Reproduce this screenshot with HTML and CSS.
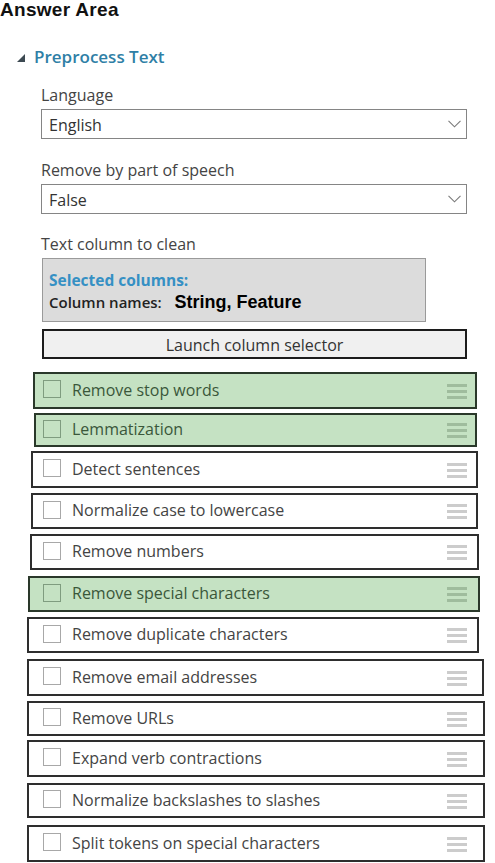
FILE: index.html
```html
<!DOCTYPE html>
<html>
<head>
<meta charset="utf-8">
<link rel="stylesheet" href="styles.css">
</head>
<body>
<h1 class="answer">Answer Area</h1>
<div class="title">
  <svg class="tri" width="8" height="8" viewBox="0 0 8 8"><polygon points="8,0 8,8 0,8" fill="#3d4a52"/></svg>
  <span>Preprocess Text</span>
</div>
<div class="field">
  <div class="label">Language</div>
  <div class="select"><span>English</span>
    <svg class="chev" width="13" height="8" viewBox="0 0 13 8"><polyline points="0.5,0.8 6.5,6.8 12.5,0.8" fill="none" stroke="#7a7a7a" stroke-width="1.1"/></svg>
  </div>
</div>
<div class="field f2">
  <div class="label">Remove by part of speech</div>
  <div class="select"><span>False</span>
    <svg class="chev" width="13" height="8" viewBox="0 0 13 8"><polyline points="0.5,0.8 6.5,6.8 12.5,0.8" fill="none" stroke="#7a7a7a" stroke-width="1.1"/></svg>
  </div>
</div>
<div class="field f3">
  <div class="label">Text column to clean</div>
  <div class="colbox">
    <div class="sel-cols">Selected columns:</div>
    <div class="col-names">Column names: <span class="names">String, Feature</span></div>
  </div>
  <div class="launch">Launch column selector</div>
</div>
<div class="list">
  <div class="row sel"><span class="cb"></span><span class="txt">Remove stop words</span><span class="grip"><i></i><i></i><i></i></span></div>
  <div class="row sel"><span class="cb"></span><span class="txt">Lemmatization</span><span class="grip"><i></i><i></i><i></i></span></div>
  <div class="row"><span class="cb"></span><span class="txt">Detect sentences</span><span class="grip"><i></i><i></i><i></i></span></div>
  <div class="row"><span class="cb"></span><span class="txt">Normalize case to lowercase</span><span class="grip"><i></i><i></i><i></i></span></div>
  <div class="row"><span class="cb"></span><span class="txt">Remove numbers</span><span class="grip"><i></i><i></i><i></i></span></div>
  <div class="row sel"><span class="cb"></span><span class="txt">Remove special characters</span><span class="grip"><i></i><i></i><i></i></span></div>
  <div class="row"><span class="cb"></span><span class="txt">Remove duplicate characters</span><span class="grip"><i></i><i></i><i></i></span></div>
  <div class="row"><span class="cb"></span><span class="txt">Remove email addresses</span><span class="grip"><i></i><i></i><i></i></span></div>
  <div class="row"><span class="cb"></span><span class="txt">Remove URLs</span><span class="grip"><i></i><i></i><i></i></span></div>
  <div class="row"><span class="cb"></span><span class="txt">Expand verb contractions</span><span class="grip"><i></i><i></i><i></i></span></div>
  <div class="row"><span class="cb"></span><span class="txt">Normalize backslashes to slashes</span><span class="grip"><i></i><i></i><i></i></span></div>
  <div class="row"><span class="cb"></span><span class="txt">Split tokens on special characters</span><span class="grip"><i></i><i></i><i></i></span></div>
</div>
</body>
</html>
```

FILE: styles.css
```css
html, body {
  margin: 0;
  padding: 0;
  background: #ffffff;
}
body {
  width: 495px;
  height: 863px;
  overflow: hidden;
  font-family: "Open Sans", "Noto Sans", sans-serif;
  color: #444444;
}
.answer {
  margin: 0;
  font-family: "Liberation Sans", Arial, sans-serif;
  font-weight: 700;
  font-size: 19px;
  line-height: 19px;
  color: #111111;
  letter-spacing: 0.3px;
}
.title {
  display: flex;
  align-items: center;
  margin-top: 26px;
  height: 24px;
  line-height: 24px;
  font-size: 17px;
  font-weight: 600;
  color: #2f7fa6;
}
.tri {
  margin-left: 17px;
  margin-right: 9px;
  margin-top: 2px;
}
.field {
  margin-left: 41px;
  width: 426px;
  margin-top: 16px;
}
.f2 { margin-top: 21px; }
.f3 { margin-top: 20px; }
.label {
  font-size: 16px;
  line-height: 20px;
  height: 20px;
  color: #444444;
}
.select {
  box-sizing: border-box;
  margin-top: 4px;
  height: 30px;
  border: 1px solid #858585;
  display: flex;
  align-items: center;
  justify-content: space-between;
  padding: 1px 5px 0 7px;
  font-size: 16px;
  color: #333333;
}
.chev {
  margin-top: -1px;
}
.colbox {
  box-sizing: border-box;
  margin-top: 4px;
  margin-left: 1px;
  width: 384px;
  height: 64px;
  border: 1px solid #9a9a9a;
  background: #dcdcdc;
  padding: 10px 0 0 6px;
}
.sel-cols {
  font-size: 15.5px;
  font-weight: 700;
  line-height: 22px;
  color: #3590c4;
}
.col-names {
  font-size: 15px;
  font-weight: 600;
  line-height: 22px;
  color: #222222;
}
.names {
  font-family: "Liberation Sans", Arial, sans-serif;
  font-weight: 700;
  font-size: 18px;
  color: #000000;
  margin-left: 9px;
}
.launch {
  box-sizing: border-box;
  margin-top: 7px;
  margin-left: 1px;
  width: 425px;
  height: 30px;
  border: 2px solid #1c1c1c;
  background: #f0f0f0;
  display: flex;
  align-items: center;
  justify-content: center;
  font-size: 16px;
  color: #333333;
  padding-top: 1px;
}
.list {
  display: flex;
  flex-direction: column;
}
.row {
  box-sizing: border-box;
  display: flex;
  align-items: center;
  border: 2px solid #2e2e2e;
  background: #ffffff;
  margin-top: var(--t);
  margin-left: var(--l);
  width: calc(var(--r) - var(--l) + 1px);
  height: var(--h);
  padding-left: calc(43px - var(--l) - 2px);
  padding-right: calc(var(--r) - 467px - 1px);
  font-size: 16px;
  color: #444444;
}
.row.sel {
  background: #c5e2c3;
  border-color: #2a382a;
  color: #3a573a;
}
.row:nth-child(1)  { --l: 33px; --r: 476px; --t: 13px; --h: 37px; }
.row:nth-child(2)  { --l: 34px; --r: 476px; --t: 4px;  --h: 34px; }
.row:nth-child(3)  { --l: 31px; --r: 477px; --t: 4px;  --h: 37px; }
.row:nth-child(4)  { --l: 31px; --r: 477px; --t: 5px;  --h: 36px; }
.row:nth-child(5)  { --l: 30px; --r: 478px; --t: 5px;  --h: 36px; }
.row:nth-child(6)  { --l: 28px; --r: 479px; --t: 6px;  --h: 36px; }
.row:nth-child(7)  { --l: 27px; --r: 478px; --t: 5px;  --h: 36px; }
.row:nth-child(8)  { --l: 27px; --r: 483px; --t: 6px;  --h: 37px; }
.row:nth-child(9)  { --l: 27px; --r: 484px; --t: 5px;  --h: 35px; }
.row:nth-child(10) { --l: 27px; --r: 484px; --t: 4px;  --h: 37px; }
.row:nth-child(11) { --l: 27px; --r: 484px; --t: 6px;  --h: 35px; }
.row:nth-child(12) { --l: 27px; --r: 484px; --t: 7px;  --h: 37px; }
.cb {
  box-sizing: border-box;
  width: 18px;
  height: 18px;
  border: 1px solid #a8a8a8;
  flex: none;
  margin-top: -3px;
}
.row.sel .cb {
  border-color: #7f9c7f;
}
.txt {
  flex: 1;
  margin-left: 11px;
  line-height: 20px;
  margin-top: -2px;
}
.grip {
  display: flex;
  flex-direction: column;
  width: 20px;
  flex: none;
  margin-top: 1px;
}
.grip i {
  display: block;
  height: 3px;
  background: #cccccc;
  margin-bottom: 3px;
}
.grip i:last-child {
  margin-bottom: 0;
}
.row.sel .grip i {
  background: #9fbc9d;
}
```
